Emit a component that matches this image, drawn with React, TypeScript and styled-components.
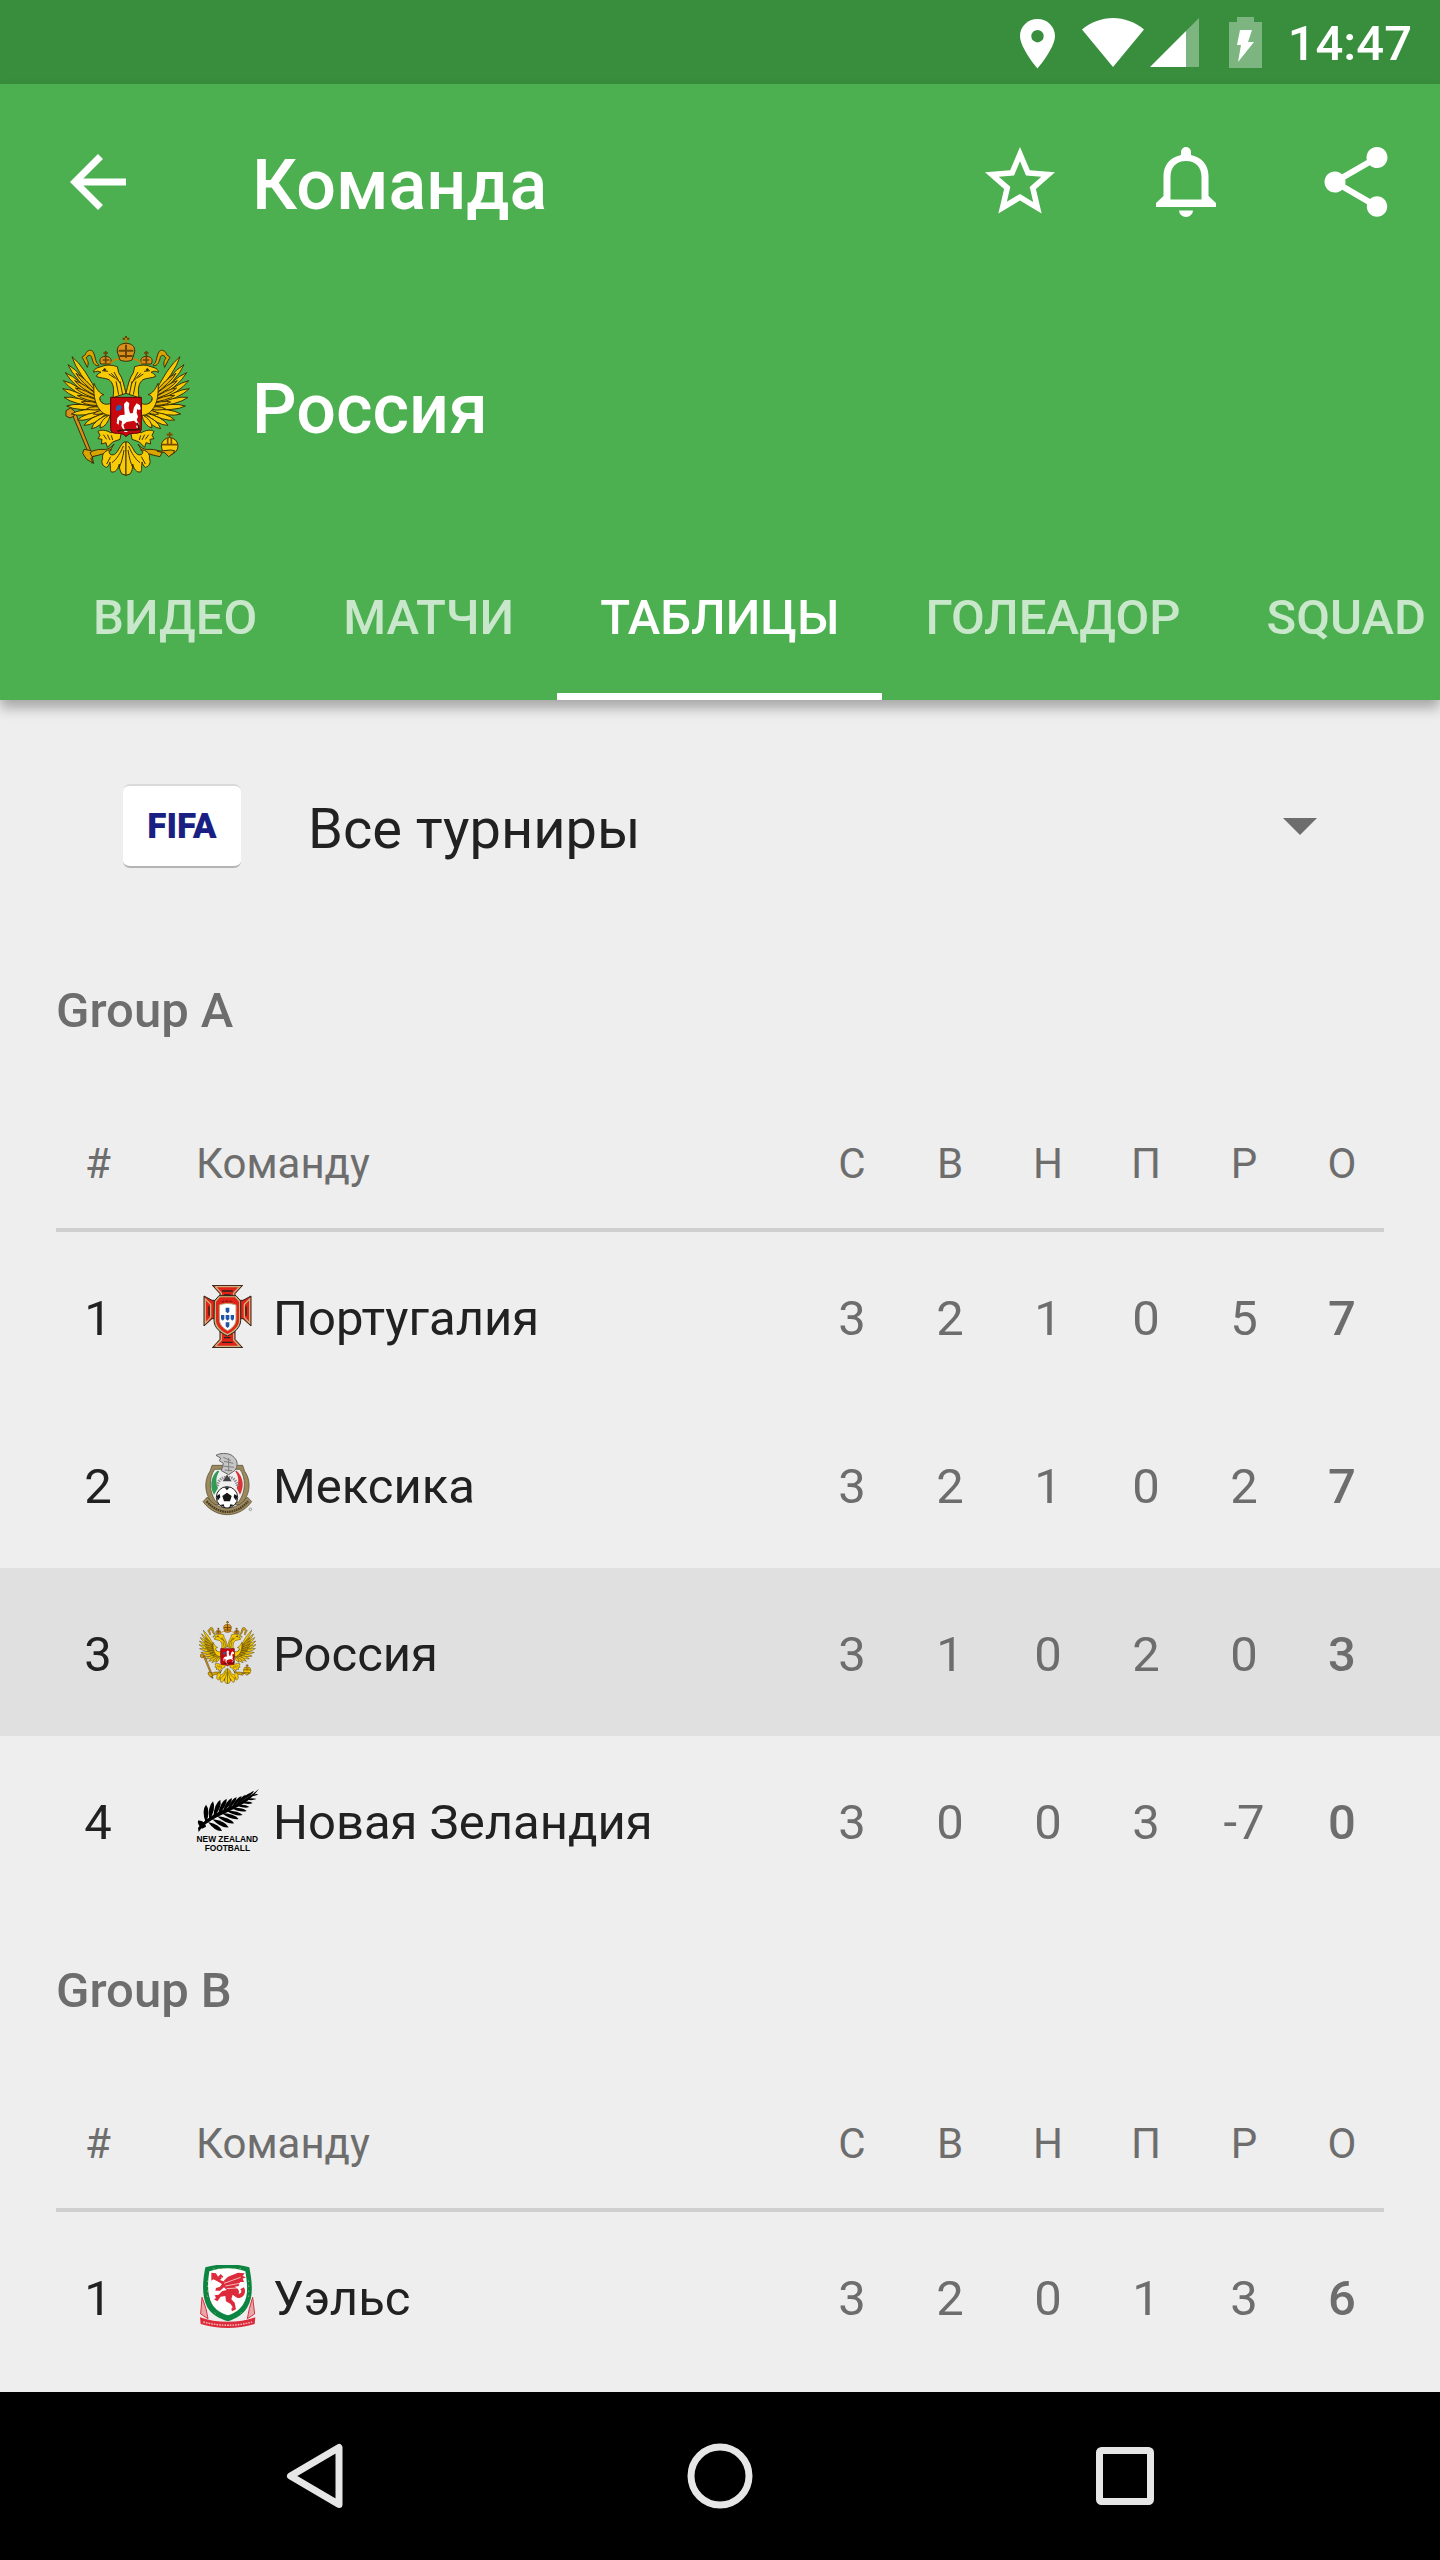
import React, { useState } from 'react';
import styled, { createGlobalStyle } from 'styled-components';

const color = {
  primary: '#4caf50',
  primaryDark: '#388e3c',
  surface: '#eeeeee',
  selected: '#e0e0e0',
  divider: '#cfcfcf',
  text: '#212121',
  secondary: '#6d6d6d',
};

const GlobalStyle = createGlobalStyle`
  *, *::before, *::after { box-sizing: border-box; }
  body { margin: 0; background: ${color.surface}; }
  button, select { font: inherit; color: inherit; border: 0; background: none; padding: 0; margin: 0; }
  svg { display: block; }
`;

const Screen = styled.div`
  display: flex;
  flex-direction: column;
  min-height: 100vh;
  overflow: hidden;
  background: ${color.surface};
  color: ${color.text};
  font-family: Roboto, 'Noto Sans', sans-serif;
  font-size: 49px;
`;

const StatusBar = styled.div`
  display: flex;
  align-items: center;
  justify-content: flex-end;
  height: 84px;
  padding: 2px 28px 0 0;
  background: ${color.primaryDark};
  color: #fff;
  font-weight: 500;
`;

const StatusIcons = styled.div`
  display: flex;
  align-items: center;
  margin-right: 23px;
`;

const Header = styled.header`
  position: relative;
  background: ${color.primary};
  color: #fff;
  box-shadow: 0 8px 12px rgba(0, 0, 0, 0.3);
`;

const Toolbar = styled.div`
  display: flex;
  align-items: center;
  height: 196px;
  padding-left: 56px;
`;

const IconButton = styled.button<{ $width: number }>`
  display: flex;
  align-items: center;
  justify-content: center;
  width: ${(p) => p.$width}px;
  height: 168px;
  cursor: pointer;
`;

const Title = styled.h1`
  flex: 1;
  margin: 0 0 0 112px;
  padding-top: 6px;
  font-size: 70px;
  line-height: 84px;
  font-weight: 500;
`;

const TeamBanner = styled.div`
  display: flex;
  align-items: center;
  gap: 56px;
  height: 252px;
  padding: 0 56px;
`;

const TeamTitle = styled.h2`
  margin: 0;
  padding-top: 6px;
  font-size: 70px;
  line-height: 84px;
  font-weight: 500;
`;

const Tabs = styled.nav`
  display: flex;
  height: 168px;
  padding-left: 50px;
  overflow: hidden;
`;

const Tab = styled.button<{ $active: boolean }>`
  flex: none;
  padding: 10px 43px 0;
  border-bottom: 7px solid ${(p) => (p.$active ? '#fff' : 'transparent')};
  color: ${(p) => (p.$active ? '#fff' : 'rgba(255, 255, 255, 0.7)')};
  font-weight: 500;
  cursor: pointer;
`;

const Main = styled.main`
  flex: 1;
`;

const Filter = styled.label`
  display: flex;
  align-items: center;
  height: 224px;
  padding: 28px 123px 0;
`;

const FifaCard = styled.span`
  display: flex;
  align-items: center;
  justify-content: center;
  width: 118px;
  height: 84px;
  margin-right: 67px;
  border-radius: 7px;
  border-top: 2px solid #dadada;
  border-bottom: 2px solid #b4b4b4;
  background: #fff;
  color: #1a1f83;
  font-size: 35px;
  font-weight: 900;
`;

const Select = styled.select`
  flex: 1;
  appearance: none;
  height: 84px;
  padding-top: 6px;
  font-size: 56px;
  outline: none;
`;

const GroupTitle = styled.h3`
  display: flex;
  align-items: center;
  height: 170px;
  margin: 0;
  padding: 2px 56px 0;
  color: ${color.secondary};
  font-size: 49px;
  font-weight: 500;
`;

const Table = styled.table`
  display: block;
  line-height: 56px;
`;

const Head = styled.thead`
  display: block;
  padding: 0 56px;
`;

const Body = styled.tbody`
  display: block;
`;

const Row = styled.tr`
  display: grid;
  grid-template-columns: 84px 1fr repeat(6, 84px);
  column-gap: 14px;
  align-items: center;
`;

const HeadRow = styled(Row)`
  height: 138px;
  border-bottom: 4px solid ${color.divider};
`;

const TeamRow = styled(Row)<{ $selected: boolean }>`
  height: 168px;
  padding: 0 56px;
  background: ${(p) => (p.$selected ? color.selected : 'transparent')};
`;

const HeadCell = styled.th<{ $team?: boolean }>`
  padding: ${(p) => (p.$team ? '6px 0 0 42px' : '6px 0 0')};
  color: ${color.secondary};
  font-size: 42px;
  font-weight: 400;
  text-align: ${(p) => (p.$team ? 'left' : 'center')};
`;

const Rank = styled.td`
  padding: 6px 0 0;
  text-align: center;
`;

const TeamCell = styled.td`
  display: flex;
  align-items: center;
  gap: 14px;
  padding: 0 0 0 42px;
  white-space: nowrap;
`;

const TeamName = styled.span`
  padding-top: 6px;
`;

const Stat = styled.td<{ $strong?: boolean }>`
  padding: 6px 0 0;
  color: ${color.secondary};
  font-weight: ${(p) => (p.$strong ? 500 : 400)};
  text-align: center;
`;

const SystemNav = styled.nav`
  display: grid;
  grid-template-columns: repeat(3, 1fr);
  padding: 0 112px;
  background: #000;
`;

const SystemButton = styled.button`
  display: flex;
  align-items: center;
  justify-content: center;
  height: 168px;
  cursor: pointer;
`;

/* Status and toolbar icons */

const StatusGlyphs = () => (
  <svg width="245" height="54" viewBox="0 0 245 54" fill="#fff" aria-hidden="true">
    <path fillRule="evenodd" d="M17.500 3C7.800 3 0 10.500 0 20c0 12 17.500 32.500 17.500 32.500S35 32 35 20C35 10.500 27.200 3 17.500 3zm0 11a6.200 6.200 0 1 1 0 12.400a6.200 6.200 0 1 1 0-12.400z" />
    <path d="M62 13.500C71 6 82 2 93 2s22 4 31 11.500L93 51z" />
    <path d="M130 51L166 15V51z" />
    <path d="M166 15L179 2V51H166z" opacity=".35" />
    <path opacity=".35" d="M217 1h17v5h8v46h-33V6h8z" />
    <path d="M220 14h12l-4 12h6L218 46l3-17h-4z" />
  </svg>
);

const BackIcon = () => (
  <svg width="84" height="84" viewBox="0 0 24 24" fill="#fff" aria-hidden="true">
    <path d="M20 11H7.830l5.590-5.590L12 4l-8 8 8 8 1.410-1.410L7.830 13H20v-2z" />
  </svg>
);

const StarIcon = () => (
  <svg width="84" height="84" viewBox="0 0 24 24" fill="#fff" aria-hidden="true">
    <path d="M22 9.240l-7.190-.62L12 2 9.190 8.630 2 9.240l5.460 4.730L5.820 21 12 17.270 18.180 21l-1.630-7.030L22 9.240zM12 15.400l-3.760 2.270 1-4.280-3.320-2.880 4.380-.38L12 6.100l1.710 4.040 4.380.38-3.320 2.880 1 4.280L12 15.400z" />
  </svg>
);

const BellIcon = () => (
  <svg width="64" height="70" viewBox="0 0 64 70" fill="#fff" aria-hidden="true">
    <path fillRule="evenodd" d="M25 8V5a5 5 0 0 1 10 0v3c11 2.500 17.500 10 17.500 21v20L60 56v4H0v-4l7.500-7V29C7.500 18 14 10.500 25 8zM14.500 52.500h31V30c0-10-6-16-15.500-16s-15.500 6-15.500 16z" />
    <path d="M23 63.500h14a7 6.500 0 0 1-14 0z" />
  </svg>
);

const ShareIcon = () => (
  <svg width="84" height="84" viewBox="0 0 24 24" fill="#fff" aria-hidden="true">
    <path d="M18 16.080c-.76 0-1.440.3-1.960.77L8.910 12.700c.05-.23.09-.46.09-.7s-.04-.47-.09-.7l7.050-4.110c.54.5 1.250.81 2.040.81 1.660 0 3-1.340 3-3s-1.340-3-3-3-3 1.340-3 3c0 .24.04.47.09.7L8.040 9.810C7.500 9.310 6.790 9 6 9c-1.660 0-3 1.340-3 3s1.340 3 3 3c.79 0 1.500-.31 2.040-.81l7.120 4.160c-.05.21-.08.43-.08.650 0 1.610 1.310 2.920 2.920 2.920s2.920-1.310 2.920-2.920-1.310-2.920-2.920-2.920z" />
  </svg>
);

const CaretIcon = () => (
  <svg width="34" height="17" viewBox="0 0 34 17" aria-hidden="true">
    <path d="M0 0h34L17 17z" fill={color.secondary} />
  </svg>
);

/* Team crests */

const feather = (bx: number, by: number, tx: number, ty: number, w: number) => {
  const dx = tx - bx;
  const dy = ty - by;
  const len = Math.hypot(dx, dy);
  const nx = (-dy / len) * w;
  const ny = (dx / len) * w;
  const mx = bx + dx * 0.68;
  const my = by + dy * 0.68;
  return `M${bx} ${by}Q${mx + nx} ${my + ny} ${tx} ${ty}Q${mx - nx} ${my - ny} ${bx} ${by}z`;
};

const longFeathers: number[][] = [
  [178, 262, 96, 140], [176, 268, 84, 164], [174, 274, 76, 188], [174, 280, 70, 212],
  [176, 285, 68, 236], [180, 290, 72, 262], [184, 295, 80, 288], [190, 300, 94, 312],
  [196, 304, 112, 330], [202, 308, 132, 346], [208, 312, 154, 356], [212, 312, 180, 354],
];

const shortFeathers: number[][] = [
  [176, 255, 108, 190], [178, 262, 104, 212], [182, 270, 106, 234], [188, 278, 112, 256],
  [194, 286, 124, 276], [202, 294, 140, 296], [208, 300, 160, 312],
];

const EagleHalf = () => (
  <g>
    {longFeathers.map(([a, b, c, d]) => (
      <path key={`${c}-${d}`} d={feather(a, b, c, d, 15)} />
    ))}
    {shortFeathers.map(([a, b, c, d]) => (
      <path key={`${c}-${d}`} d={feather(a, b, c, d, 10)} fill="#e3b000" />
    ))}
    <path d="M212 280c-12 6-28 2-32-10c-3-8 4-16 12-16c-14-4-22-16-30-34c-2 26 0 60 18 80c10 12 20 16 32 16z" />
    <path d="M258 250c-6-24-10-46-22-62l-4-18c-16-6-36-6-46-1l-12 4c-8 2-14 8-13 14c8-5 16-4 22 0c-6 2-12 6-14 12c10 6 26 4 38 10c14 10 16 30 12 54z" />
    <path d="M186 182l18 2M206 192l18 12M214 190l20 22M222 186l18 34M228 214l8 40M240 214l8 40" fill="none" />
    <circle cx="194" cy="179" r="3" fill="#222" />
    <path d="M182 162c-6-14 0-22 14-23c16 1 20 9 16 23z" fill="#d9901a" />
    <path d="M197 139v-16M190 129h14M188 150h20M197 141v20" fill="none" stroke="#6b4300" strokeWidth="5" />
    <path d="M176 164c-12-8-8-26-18-40c-8-8-20 0-22 10l-10 8l6 10l10 20c6-14 0-22-4-28c8-12 16-10 18 2c4 12 6 20 20 22z" fill="#d9a300" />
    <path d="M212 368c-14-8-28-10-38-4l6 12l-6 10l12 2l-2 14l14-4l4 14l16-16l22-8l4-22z" />
    <path d="M190 374l10 14M202 374l8 16M214 376l4 14" fill="none" />
    <path d="M222 402c-10 12-18 18-36 16c-16 0-28 4-36 10l6 12l18-4l34-10z" fill="#d9a300" />
    <path d="M252 396c-18 16-20 44-40 38c-8-6-4-14 2-14c-16-2-30 12-26 26c-6 10 0 24 12 26c6-4 8-10 10-16c2 16 0 24 4 30c14 2 20-10 24-24c0 14 2 22 8 30l12 4V396z" />
    <path d="M250 408c-8 20-20 40-34 50M252 420c-4 24-8 40-16 56M212 440l-12 22" fill="none" />
  </g>
);

const RussiaCrest = ({ size }: { size: number }) => (
  <svg width={size} height={size} viewBox="48 78 420 420" aria-hidden="true">
    <g fill="#f7cb05" stroke="#3c2f05" strokeWidth="3" strokeLinejoin="round">
      <path d="M98 316l46 110l12 34l4-4l-8-34l-44-110z" fill="#d9901a" />
      <path d="M78 302l14-8l12 10l-2 14l-12 6l-12-6z" fill="#d9901a" />
      <path d="M132 418l22 4l12 14l-14 10l10 14l-22-12l-12-18z" fill="#d9a300" />
      <EagleHalf />
      <g transform="matrix(-1 0 0 1 516 0)"><EagleHalf /></g>
      <path d="M212 162c8-16 24-18 46-12c22-6 38-4 46 12" fill="none" stroke="#c78400" strokeWidth="5" />
      <path d="M240 150l-8-24c-2-18 10-26 26-26s28 8 26 26l-8 24c-10 5-26 5-36 0z" fill="#d9901a" />
      <path d="M258 78v24M248 86h20M258 104v40M236 122h44M238 138h40" fill="none" stroke="#6b4300" strokeWidth="6" />
      <path d="M258 84v14" stroke="#f7cb05" />
      <circle cx="389" cy="408" r="25" />
      <path d="M389 366v18M380 374h18M365 404h48M383 384v22M394 384v22" stroke="#7b4a00" strokeWidth="5" />
      <path d="M352 424l22 4l12 12l14-10l4-8l-12-2z" fill="#d9a300" />
      <path d="M212 262h92v94c0 12-10 14-20 14c-12 0-20 2-26 10c-6-8-14-10-26-10c-10 0-20-2-20-14z" fill="#c8080e" stroke="#5a0000" />
    </g>
    <path d="M246 290c-8-10-20-6-18 12l14-2z" fill="#1d62b8" />
    <path d="M252 282l8-8l8 6l-2 14l4 16h8l4-18l8-12l10 6l2 12l-6 2l-4-4l-2 12l4 12l-4 10l8 12l-4 12l-6-2l4-10l-10-10l-22 4l-10 8l4 14l10 8h-10l-10-18l2-14l-8-4l-2 14l-6-4l2-16l8-8l14-2z" fill="#fff" />
    <path d="M232 364c14-8 44-2 66-6l-6-20" fill="none" stroke="#3c1205" strokeWidth="5" />
  </svg>
);

const PortugalCrest = () => (
  <svg width="63" height="63" viewBox="48 42 189 189" aria-hidden="true">
    <g fill="#e2231a" stroke="#27231a" strokeWidth="3" strokeLinejoin="round">
      <path d="M97 43h91l-23 25v20h24l24-13v90l-24-22h-24v62l23 25H97l23-25v-62H96l-24 22V75l24 13h24V68z" />
    </g>
    <g fill="none" stroke="#c9b27c" strokeWidth="4">
      <path d="M106 47h73l-18 19v24M124 90V66l-18-19M106 226h73l-18-19v-20M124 187v20l-18 19" />
      <path d="M76 84v72l16-17V100zM209 84v72l-16-17V100z" />
      <path d="M126 60h32M132 72h20M126 214h32M132 200h20M87 106v28M198 106v28" stroke="#27231a" />
    </g>
    <path d="M103 90l14-16h51l14 16v58c0 22-20 38-40 47c-20-9-40-25-40-47z" fill="#c9b27c" stroke="#27231a" strokeWidth="3" />
    <path d="M108 92l12-13h45l12 13v55c0 20-17 33-35 42c-18-9-34-22-34-42z" fill="#e2231a" />
    <path d="M118 102c16-6 34-6 50 0v42c0 18-12 28-25 35c-13-7-25-17-25-35z" fill="#fff" stroke="#b9a46e" strokeWidth="3" />
    <g fill="#1f56a5">
      <path d="M137 110h11v12l-5 5l-6-5zM137 132h11v12l-5 5l-6-5zM137 154h11v12l-5 5l-6-5zM123 132h10v12l-5 5l-5-5zM152 132h10v12l-5 5l-5-5z" />
    </g>
    <path d="M126 93q16-5 33 0" fill="none" stroke="#8d1713" strokeWidth="5" strokeDasharray="7 4" />
  </svg>
);

const MexicoCrest = () => (
  <svg width="63" height="63" viewBox="48 547 189 189" aria-hidden="true">
    <g stroke="#4d422b" strokeWidth="2">
      <path d="M96 584h92l6 18c16 22 16 50 8 70l-14 30H96l-14-30c-8-22-6-50 8-70z" fill="#9c8a5e" />
      <path d="M104 596h76c18 26 18 66-4 98h-68c-22-32-22-72-4-98z" fill="#efefef" />
    </g>
    <path d="M112 600c-20 20-24 46-10 72l12-20c-8-18-6-34 4-50z" fill="#2f9b54" />
    <path d="M170 600c20 20 24 46 10 72l-10-20c8-18 6-34-4-50z" fill="#d93237" />
    <path d="M108 554c18-10 46-6 54 6c12 10 12 28 2 40l-18 12l-22-12l6-22l-12-8l4-8z" fill="#c6c6c6" stroke="#666" strokeWidth="3" />
    <path d="M130 560l22 10M132 572l28 6M128 586l34 4M134 598l22 2M146 562v40" stroke="#808080" strokeWidth="3" />
    <path d="M112 646c4-36 56-36 60 0" fill="none" stroke="#8a8a8a" strokeWidth="9" strokeDasharray="4 3" />
    <path d="M128 632l13-20l14 20z" fill="#444" />
    <path d="M82 679c32 44 88 44 120 0l13 14c-38 52-108 52-146 0z" fill="#9c8a5e" stroke="#4d422b" strokeWidth="2" />
    <path d="M80 692c36 42 88 42 124 0" fill="none" stroke="#4a3d22" strokeWidth="7" strokeDasharray="5 2" />
    <circle cx="141" cy="680" r="32" fill="#fff" stroke="#222" strokeWidth="3" />
    <path d="M141 666l14 10l-5 16h-18l-5-16zM133 650h16l-8 9zM110 676l9-6l2 10l-8 10zM172 676l-9-6l-2 10l8 10zM120 703l11-2l3 9zM162 703l-11-2l-3 9z" fill="#171717" />
    <circle cx="211" cy="716" r="4" fill="none" stroke="#777" strokeWidth="2" />
  </svg>
);

const frondLeaves: number[][] = [
  [78, 668, 78, 612, 15], [88, 660, 99, 602, 14], [100, 651, 121, 597, 14], [114, 642, 140, 594, 13],
  [128, 634, 156, 592, 11], [142, 627, 170, 589, 10], [156, 619, 185, 586, 9], [170, 611, 198, 582, 8],
  [184, 602, 210, 577, 7], [196, 594, 222, 570, 6], [84, 664, 126, 691, 13], [96, 655, 146, 680, 13],
  [110, 646, 162, 668, 12], [124, 637, 176, 655, 11], [138, 630, 188, 643, 10], [152, 622, 200, 631, 9],
  [166, 614, 208, 619, 8], [180, 605, 218, 607, 7], [194, 596, 228, 595, 6], [206, 587, 235, 581, 5],
];

const NewZealandCrest = () => (
  <svg width="63" height="63" viewBox="48 565 189 189" aria-hidden="true">
    <path d="M56 694l-2-12c18-24 50-44 88-60c40-18 70-34 95-58c-20 30-48 48-86 66c-44 20-74 36-88 54z" />
    <path d="M66 684c-10-8-14-18-12-24c12-2 22 8 24 18z" />
    {frondLeaves.map(([a, b, c, d, w]) => (
      <path key={`${c}-${d}`} d={feather(a, b, c, d, w)} />
    ))}
    <g fontFamily="Liberation Sans, Arial, sans-serif" fontWeight="700" textAnchor="middle">
      <text x="142" y="725" fontSize="25">NEW ZEALAND</text>
      <text x="142" y="752" fontSize="25">FOOTBALL</text>
    </g>
  </svg>
);

const WalesCrest = () => (
  <svg width="63" height="63" viewBox="48 73 189 189" aria-hidden="true">
    <path d="M66 170l-4 50l22 14l-6-30zM218 170l6 50l-22 14l6-30z" fill="#e9a7ab" stroke="#d8343f" strokeWidth="3" />
    <path d="M60 230c50 18 116 18 166 0l-2 20c-54 16-108 16-162 0z" fill="#dc2c3c" />
    <path d="M70 244c48 13 100 13 146 0" fill="none" stroke="#f6bcc0" strokeWidth="4" strokeDasharray="5 3" />
    <path d="M76 80c40-12 94-12 132 0c8 42 14 88-6 120c-12 20-32 34-58 42c-28-8-50-22-62-42c-18-34-14-80-6-120z" fill="#0c8442" />
    <path d="M88 92c34-12 76-12 108 0c6 38 10 72-6 98c-10 16-26 28-46 34c-22-6-38-18-48-34c-14-26-14-60-8-98z" fill="#fff" />
    <path d="M82 120v50M206 120v50M100 84h20M164 84h20M104 216l12 10M184 216l-12 10" stroke="#c9c65a" strokeWidth="3" strokeDasharray="3 12" />
    <path d="M94 96l14 2l6 10l8-8l8 8l-10 10l10 4l14-14l30-12l20 2l-6 8l10 4l-10 4l4 10l-12 0l-4 12l-12 2c14 6 14 16 12 22c10-2 10-12 4-14l12-6c8 14 0 32-18 32c-6-2-12-8-16-10l-4 14l10 10l4 20l-12 6l-2-8l4-4l-6-10l-14-8l-2-16l-14 2l-10 14l-10-6l6-4l-4-8l12-2l10-10l14-4l-8-8l-12 10l-14 0l2-8l12-4l6-8l-14-8l-12-6l-6 4z" fill="#dc2c3c" />
    <path d="M132 128l50-18M136 136l44-8M140 144l32-2M124 110l8 12" stroke="#fff" strokeWidth="2" />
  </svg>
);

/* Data */

type Team = { name: string; crest: React.ReactNode; stats: string[]; selected?: boolean };
type Group = { name: string; teams: Team[] };

const tabs = ['ВИДЕО', 'МАТЧИ', 'ТАБЛИЦЫ', 'ГОЛЕАДОР', 'SQUAD'];
const columns = ['С', 'В', 'Н', 'П', 'Р', 'О'];

const groups: Group[] = [
  {
    name: 'Group A',
    teams: [
      { name: 'Португалия', crest: <PortugalCrest />, stats: ['3', '2', '1', '0', '5', '7'] },
      { name: 'Мексика', crest: <MexicoCrest />, stats: ['3', '2', '1', '0', '2', '7'] },
      { name: 'Россия', crest: <RussiaCrest size={63} />, stats: ['3', '1', '0', '2', '0', '3'], selected: true },
      { name: 'Новая Зеландия', crest: <NewZealandCrest />, stats: ['3', '0', '0', '3', '-7', '0'] },
    ],
  },
  {
    name: 'Group B',
    teams: [{ name: 'Уэльс', crest: <WalesCrest />, stats: ['3', '2', '0', '1', '3', '6'] }],
  },
];

const Standings = ({ group }: { group: Group }) => (
  <section>
    <GroupTitle>{group.name}</GroupTitle>
    <Table aria-label={group.name}>
      <Head>
        <HeadRow>
          <HeadCell scope="col">#</HeadCell>
          <HeadCell scope="col" $team>Команду</HeadCell>
          {columns.map((c) => (
            <HeadCell scope="col" key={c}>{c}</HeadCell>
          ))}
        </HeadRow>
      </Head>
      <Body>
        {group.teams.map((team, i) => (
          <TeamRow key={team.name} $selected={!!team.selected}>
            <Rank>{i + 1}</Rank>
            <TeamCell>{team.crest}<TeamName>{team.name}</TeamName></TeamCell>
            {team.stats.map((s, j) => (
              <Stat key={columns[j]} $strong={j === team.stats.length - 1}>{s}</Stat>
            ))}
          </TeamRow>
        ))}
      </Body>
    </Table>
  </section>
);

export default function App() {
  const [active, setActive] = useState('ТАБЛИЦЫ');
  return (
    <Screen lang="ru">
      <GlobalStyle />
      <StatusBar>
        <StatusIcons><StatusGlyphs /></StatusIcons>
        <time>14:47</time>
      </StatusBar>
      <Header>
        <Toolbar>
          <IconButton $width={84} aria-label="Назад"><BackIcon /></IconButton>
          <Title>Команда</Title>
          <IconButton $width={168} aria-label="В избранное"><StarIcon /></IconButton>
          <IconButton $width={168} aria-label="Уведомления"><BellIcon /></IconButton>
          <IconButton $width={168} aria-label="Поделиться"><ShareIcon /></IconButton>
        </Toolbar>
        <TeamBanner>
          <RussiaCrest size={140} />
          <TeamTitle>Россия</TeamTitle>
        </TeamBanner>
        <Tabs>
          {tabs.map((t) => (
            <Tab key={t} $active={t === active} onClick={() => setActive(t)}>{t}</Tab>
          ))}
        </Tabs>
      </Header>
      <Main>
        <Filter>
          <FifaCard>FIFA</FifaCard>
          <Select aria-label="Турнир">
            <option>Все турниры</option>
          </Select>
          <CaretIcon />
        </Filter>
        {groups.map((g) => (
          <Standings key={g.name} group={g} />
        ))}
      </Main>
      <SystemNav>
        <SystemButton aria-label="Назад">
          <svg width="58" height="66" viewBox="0 0 58 66" fill="none" stroke="#e6e6e6" strokeWidth="7" strokeLinejoin="round" aria-hidden="true">
            <path d="M53 4.500v57L4.500 33z" />
          </svg>
        </SystemButton>
        <SystemButton aria-label="Домой">
          <svg width="66" height="66" viewBox="0 0 66 66" fill="none" stroke="#e6e6e6" strokeWidth="7" aria-hidden="true">
            <circle cx="33" cy="33" r="29" />
          </svg>
        </SystemButton>
        <SystemButton aria-label="Недавние">
          <svg width="58" height="58" viewBox="0 0 58 58" fill="none" stroke="#e6e6e6" strokeWidth="7" aria-hidden="true">
            <rect x="3.500" y="3.500" width="51" height="51" rx="2" />
          </svg>
        </SystemButton>
      </SystemNav>
    </Screen>
  );
}
